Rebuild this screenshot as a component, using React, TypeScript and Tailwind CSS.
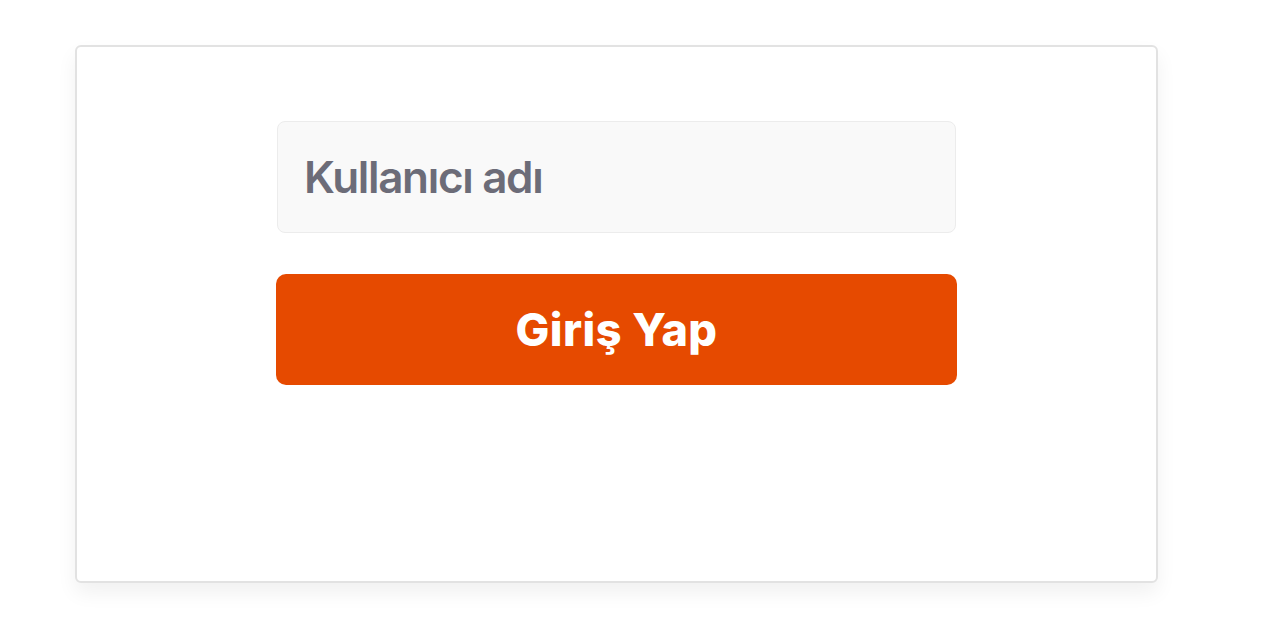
export default function App() {
  return (
    <div className="min-h-screen bg-white pl-[75px] pt-[45px] font-['Inter',sans-serif]">
      <div className="flex h-[538px] w-[1083px] flex-col items-center rounded-md border-2 border-[#e2e2e2] bg-white pt-[74px] shadow-[0_10px_20px_rgba(0,0,0,0.06)]">
        <div className="flex h-[112px] w-[679px] items-center rounded-lg border border-[#ececec] bg-[#f9f9f9] px-[26px]">
          <input
            placeholder="Kullanıcı adı"
            className="w-full bg-transparent text-[44px] font-semibold tracking-[-0.03em] text-[#6c6c78] outline-none placeholder:text-[#6c6c78]"
          />
        </div>
        <button className="mt-[41px] h-[111px] w-[681px] rounded-[10px] bg-[#e64a00] text-[45px] font-extrabold tracking-[0.01em] text-white">
          Giriş Yap
        </button>
      </div>
    </div>
  );
}
